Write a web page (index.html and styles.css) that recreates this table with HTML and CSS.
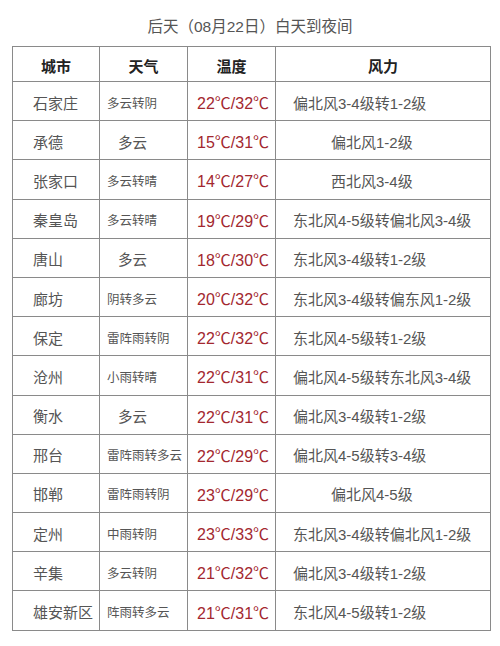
FILE: index.html
```html
<!DOCTYPE html>
<html lang="zh">
<head>
<meta charset="utf-8">
<title>后天天气</title>
<link rel="stylesheet" href="styles.css">
</head>
<body>
<div class="title">后天（08月22日）白天到夜间</div>
<table class="weather">
  <colgroup>
    <col class="c-city"><col class="c-wx"><col class="c-temp"><col class="c-wind">
  </colgroup>
  <thead>
    <tr><th>城市</th><th>天气</th><th>温度</th><th>风力</th></tr>
  </thead>
  <tbody>
    <tr><td class="city">石家庄</td><td class="wx">多云转阴</td><td class="temp">22℃/32℃</td><td class="wind">偏北风3-4级转1-2级</td></tr>
    <tr><td class="city">承德</td><td class="wx big">多云</td><td class="temp">15℃/31℃</td><td class="wind in">偏北风1-2级</td></tr>
    <tr><td class="city">张家口</td><td class="wx">多云转晴</td><td class="temp">14℃/27℃</td><td class="wind in">西北风3-4级</td></tr>
    <tr><td class="city">秦皇岛</td><td class="wx">多云转晴</td><td class="temp">19℃/29℃</td><td class="wind">东北风4-5级转偏北风3-4级</td></tr>
    <tr><td class="city">唐山</td><td class="wx big">多云</td><td class="temp">18℃/30℃</td><td class="wind">东北风3-4级转1-2级</td></tr>
    <tr><td class="city">廊坊</td><td class="wx">阴转多云</td><td class="temp">20℃/32℃</td><td class="wind">东北风3-4级转偏东风1-2级</td></tr>
    <tr><td class="city">保定</td><td class="wx">雷阵雨转阴</td><td class="temp">22℃/32℃</td><td class="wind">东北风4-5级转1-2级</td></tr>
    <tr><td class="city">沧州</td><td class="wx">小雨转晴</td><td class="temp">22℃/31℃</td><td class="wind">偏北风4-5级转东北风3-4级</td></tr>
    <tr><td class="city">衡水</td><td class="wx big">多云</td><td class="temp">22℃/31℃</td><td class="wind">偏北风3-4级转1-2级</td></tr>
    <tr><td class="city">邢台</td><td class="wx">雷阵雨转多云</td><td class="temp">22℃/29℃</td><td class="wind">偏北风4-5级转3-4级</td></tr>
    <tr><td class="city">邯郸</td><td class="wx">雷阵雨转阴</td><td class="temp">23℃/29℃</td><td class="wind in">偏北风4-5级</td></tr>
    <tr><td class="city">定州</td><td class="wx">中雨转阴</td><td class="temp">23℃/33℃</td><td class="wind">东北风3-4级转偏北风1-2级</td></tr>
    <tr><td class="city">辛集</td><td class="wx">多云转阴</td><td class="temp">21℃/32℃</td><td class="wind">偏北风3-4级转1-2级</td></tr>
    <tr><td class="city">雄安新区</td><td class="wx">阵雨转多云</td><td class="temp">21℃/31℃</td><td class="wind">东北风4-5级转1-2级</td></tr>
  </tbody>
</table>
</body>
</html>
```
FILE: styles.css
```css
html, body {
  margin: 0;
  padding: 0;
  background: #ffffff;
}
body {
  font-family: "Liberation Sans", "Noto Sans CJK SC", sans-serif;
  color: #555555;
}
.title {
  box-sizing: border-box;
  height: 46px;
  padding-top: 17px;
  line-height: 20px;
  font-size: 15.5px;
  text-align: center;
  color: #555555;
}
.weather {
  margin: 0 0 0 12px;
  width: 478px;
  table-layout: fixed;
  border-collapse: collapse;
}
.c-city { width: 87px; }
.c-wx { width: 88px; }
.c-temp { width: 88px; }
.c-wind { width: 215px; }
.weather th,
.weather td {
  border: 1px solid #8a8a8a;
  padding: 2px 0 0 0;
  white-space: nowrap;
  overflow: hidden;
  vertical-align: middle;
}
.weather thead tr { height: 35px; }
.weather tbody tr { height: 39.2px; }
.weather th {
  font-size: 15px;
  font-weight: bold;
  color: #222222;
  text-align: center;
}
.city {
  font-size: 15px;
  padding-left: 20px !important;
  text-align: left;
}
.wx {
  font-size: 12.5px;
  padding-left: 7px !important;
  text-align: left;
}
.wx.big {
  font-size: 14.5px;
  padding-left: 18px !important;
}
.temp {
  font-size: 16px;
  color: #a3282f;
  padding-left: 9px !important;
  text-align: left;
}
.wind {
  font-size: 15px;
  padding-left: 17px !important;
  text-align: left;
}
.wind.in {
  padding-left: 55px !important;
}
```
